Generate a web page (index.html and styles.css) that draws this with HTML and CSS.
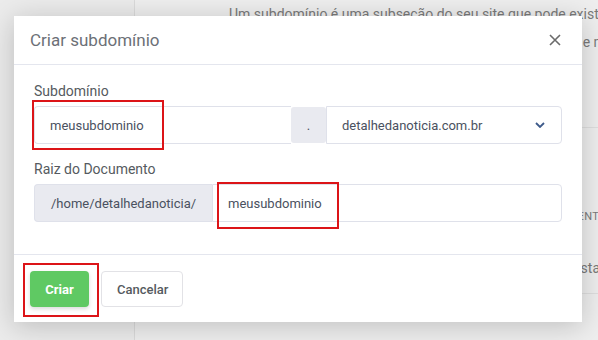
FILE: index.html
```html
<!DOCTYPE html>
<html lang="pt-BR">
<head>
    <meta charset="UTF-8">
    <meta name="viewport" content="width=device-width, initial-scale=1.0">
    <title>Criar subdomínio</title>
    <link rel="stylesheet" href="styles.css">
</head>
<body>
    <div class="page">
        <aside class="sidebar"></aside>
        <main class="content">
            <p class="intro">Um subdomínio é uma subseção do seu site que pode existir como um novo site sem um novo nome de domínio.</p>
            <p class="intro-more">Use subdomínios para criar endereços fáceis de lembrar e manter<br>o conteúdo separado do seu domínio principal.</p>
            <hr>
            <div class="table-head">Subdomínios Raiz do Documento Redirecionamento</div>
            <div class="table-row">Nenhum subdomínio cadastrado. Crie um para usar esta funcionalidade.</div>
            <hr class="last">
        </main>
    </div>

    <div class="modal">
        <header class="modal-header">
            <h1>Criar subdomínio</h1>
            <button class="close" aria-label="Fechar">
                <svg width="14" height="14" viewBox="0 0 14 14">
                    <path d="M2 2 L12 12 M12 2 L2 12" stroke="#6b6b6b" stroke-width="1.6" fill="none"/>
                </svg>
            </button>
        </header>

        <section class="modal-body">
            <label class="field-label">Subdomínio</label>
            <div class="input-group">
                <div class="input first">
                    meusubdominio
                    <span class="mark mark-sub"></span>
                </div>
                <span class="addon dot">.</span>
                <div class="input select">
                    detalhedanoticia.com.br
                    <svg width="10" height="6" viewBox="0 0 10 6">
                        <path d="M1 1 L5 5 L9 1" stroke="#3d5a8a" stroke-width="1.8" fill="none"/>
                    </svg>
                </div>
            </div>

            <label class="field-label second">Raiz do Documento</label>
            <div class="input-group">
                <span class="addon prefix">/home/detalhedanoticia/</span>
                <div class="input root">
                    meusubdominio
                    <span class="mark mark-root"></span>
                </div>
            </div>
        </section>

        <footer class="modal-footer">
            <div class="btn-wrap">
                <button class="btn btn-primary">Criar</button>
                <span class="mark mark-btn"></span>
            </div>
            <button class="btn btn-default">Cancelar</button>
        </footer>
    </div>
</body>
</html>
```

FILE: styles.css
```css
body, html {
    margin: 0;
    padding: 0;
    height: 100%;
    overflow: hidden;
    font-family: Roboto, "Liberation Sans", sans-serif;
    background-color: #eeeeee;
}
.page {
    display: flex;
    height: 100%;
    overflow: hidden;
}
.sidebar {
    width: 134px;
    flex-shrink: 0;
    background-color: #ebebeb;
    border-right: 1px solid #dadada;
}
.content {
    flex: 1;
    padding-left: 94px;
    overflow: hidden;
    color: #7a7a7a;
    font-size: 14px;
    white-space: nowrap;
}
.intro {
    margin: 4px 0 0;
    line-height: 21px;
}
.intro-more {
    margin: 7px 0 0;
    line-height: 21px;
}
hr {
    border: 0;
    border-top: 1px solid #dedede;
    margin: 53px 0 0 -94px;
    width: 900px;
}
.table-head {
    margin-top: 81px;
    font-size: 11px;
    line-height: 16px;
    text-transform: uppercase;
    padding-left: 60px;
    letter-spacing: 0.5px;
}
.table-row {
    margin-top: 33px;
    line-height: 20px;
    padding-left: 20px;
}
hr.last {
    margin-top: 15px;
}

/* modal */
.modal {
    position: absolute;
    left: 14px;
    top: 16px;
    width: 568px;
    height: 306px;
    background: #fff;
    box-shadow: 0 4px 26px rgba(0, 0, 0, 0.2);
    display: flex;
    flex-direction: column;
}
.modal-header {
    height: 48px;
    display: flex;
    align-items: center;
    justify-content: space-between;
    padding: 0 20px 0 16px;
    border-bottom: 1px solid #e4e6ee;
}
.modal-header h1 {
    margin: 0;
    font-size: 17px;
    font-weight: 400;
    color: #6c7077;
}
.close {
    border: 0;
    background: none;
    padding: 0;
    display: flex;
}
.modal-body {
    padding: 16px 20px 32px;
    display: flex;
    flex-direction: column;
}
.field-label {
    font-size: 14px;
    color: #555a60;
    line-height: 20px;
    margin-bottom: 5px;
}
.field-label.second {
    margin-top: 15px;
}
.input-group {
    display: flex;
    height: 38px;
    font-size: 13px;
    color: #4a5160;
}
.input {
    position: relative;
    display: flex;
    align-items: center;
    border: 1px solid #dfe1ea;
    border-radius: 4px;
    padding: 0 15px;
    box-sizing: border-box;
}
.input.first {
    width: 257px;
    border-radius: 4px 0 0 4px;
    border-right: 0;
}
.addon {
    display: flex;
    align-items: center;
    background-color: #e9eaf0;
    box-sizing: border-box;
}
.addon.dot {
    width: 35px;
    justify-content: center;
    border-radius: 3px;
    margin: 1px 0;
}
.input.select {
    flex: 1;
    border-radius: 0 4px 4px 0;
    justify-content: space-between;
    padding-right: 16px;
}
.addon.prefix {
    width: 178px;
    padding-left: 16px;
    border: 1px solid #dfe1ea;
    border-right: 0;
    border-radius: 4px 0 0 4px;
}
.input.root {
    flex: 1;
    border-radius: 0 4px 4px 0;
}
.modal-footer {
    margin-top: auto;
    height: 68px;
    box-sizing: border-box;
    border-top: 1px solid #e4e6ee;
    padding: 16px 16px 0;
    display: flex;
    align-items: flex-start;
    gap: 12px;
}
.btn-wrap {
    position: relative;
}
.btn {
    height: 36px;
    border-radius: 4px;
    font-family: Roboto, "Liberation Sans", sans-serif;
    font-size: 13px;
    font-weight: 700;
    padding: 0 15px;
}
.btn-primary {
    width: 59px;
    background-color: #5fc963;
    color: #fff;
    border: 0;
    box-shadow: 0 2px 4px rgba(0, 0, 0, 0.15);
}
.btn-default {
    width: 82px;
    background-color: #fff;
    color: #555a60;
    border: 1px solid #e2e2e6;
    font-weight: 500;
}

/* red annotation boxes */
.mark {
    position: absolute;
    border: 2px solid #dc1418;
    box-sizing: border-box;
    pointer-events: none;
}
.mark-sub {
    left: -3px;
    top: -7px;
    width: 132px;
    height: 50px;
}
.mark-root {
    left: 4px;
    top: -3px;
    width: 122px;
    height: 47px;
}
.mark-btn {
    left: -7px;
    top: -8px;
    width: 76px;
    height: 54px;
}
```
